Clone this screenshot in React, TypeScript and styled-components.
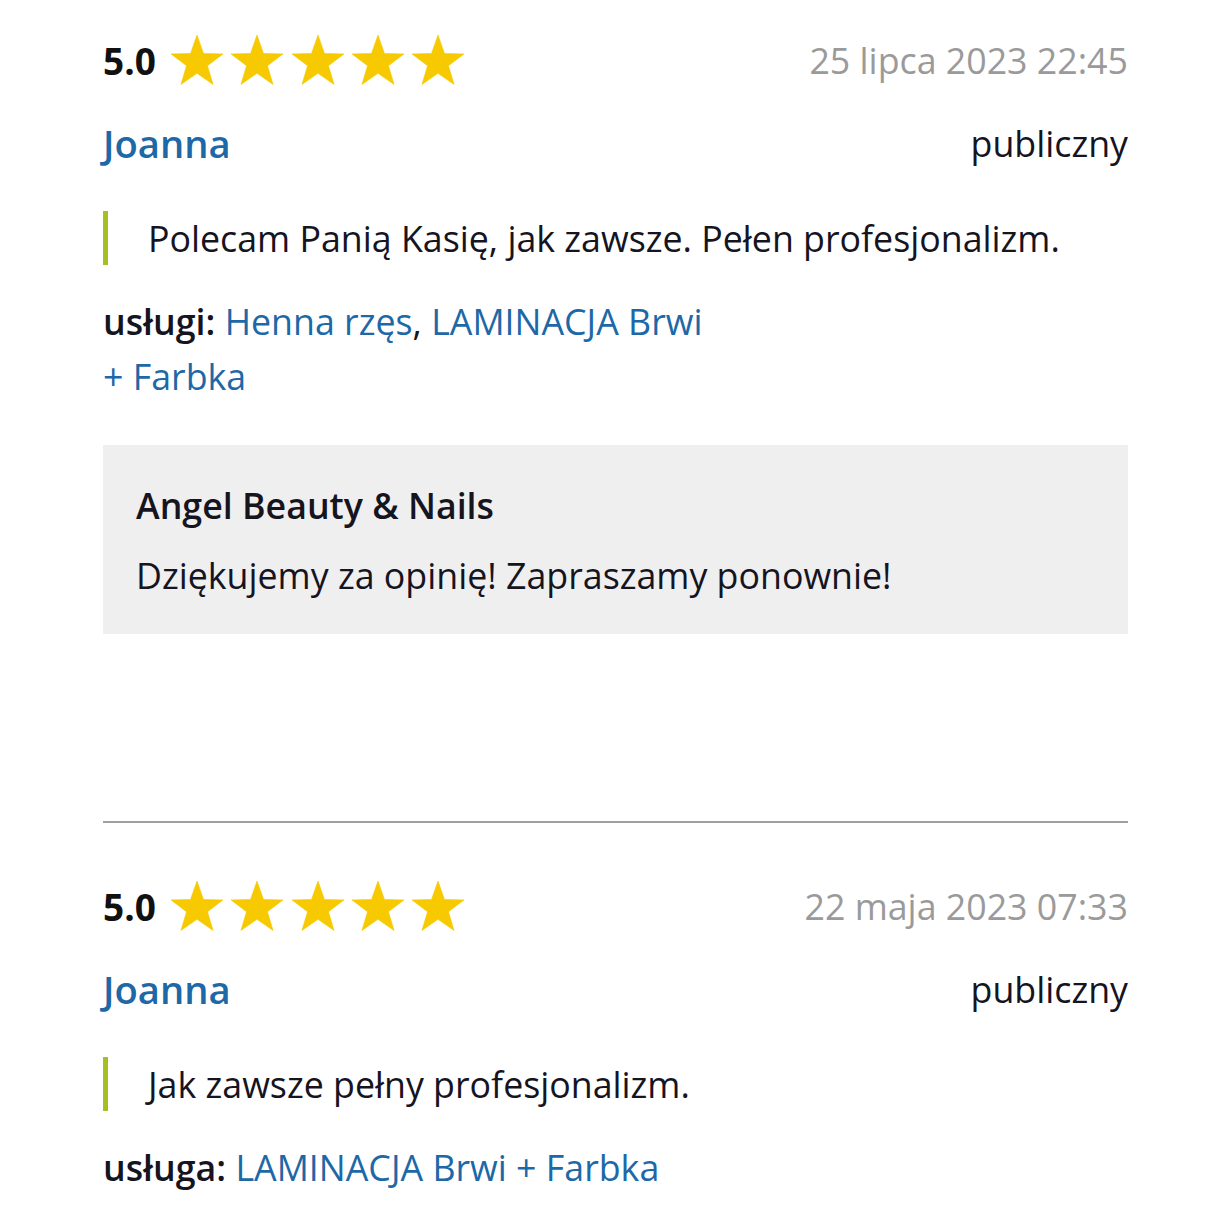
import React from 'react';
import styled, { createGlobalStyle } from 'styled-components';

const GlobalStyle = createGlobalStyle`
  html, body {
    margin: 0;
    padding: 0;
    background: #ffffff;
  }
  body {
    font-family: 'Open Sans', 'Noto Sans', sans-serif;
    color: #15141f;
  }
`;

const Page = styled.div`
  width: 1025px;
  margin-left: 103px;
  padding-top: 20px;
`;

const Review = styled.section`
  display: flex;
  flex-direction: column;
`;

const TopRow = styled.div`
  display: flex;
  align-items: center;
  justify-content: space-between;
  height: 80px;
`;

const Rating = styled.div`
  display: flex;
  align-items: center;
  gap: 15px;
`;

const Score = styled.span`
  font-size: 37px;
  font-weight: 700;
  color: #111;
`;

const Stars = styled.div`
  display: flex;
  gap: 8.4px;
`;

const DateText = styled.span`
  font-size: 35.75px;
  color: #9a9a9a;
`;

const AuthorRow = styled.div`
  display: flex;
  align-items: center;
  justify-content: space-between;
  height: 86px;
  line-height: 50px;
`;

const Author = styled.span`
  font-size: 38.2px;
  font-weight: 600;
  color: #1d68a7;
`;

const Visibility = styled.span`
  font-size: 35.75px;
  color: #15141f;
`;

const Quote = styled.blockquote`
  margin: 25px 0 0;
  border-left: 5px solid #a8bf22;
  padding: 0 0 0 40px;
  font-size: 35.75px;
  line-height: 54px;
  color: #15141f;
`;

const Services = styled.p`
  margin: 29px 0 0;
  max-width: 610px;
  font-size: 35.75px;
  line-height: 55px;
  color: #15141f;
`;

const Label = styled.b`
  font-weight: 600;
`;

const ServiceLink = styled.a`
  color: #1d68a7;
  text-decoration: none;
`;

const Reply = styled.div`
  margin-top: 41px;
  background: #efefef;
  padding: 35px 33px 34px;
  display: flex;
  flex-direction: column;
  gap: 20px;
`;

const ReplyTitle = styled.div`
  font-size: 35.75px;
  font-weight: 600;
  line-height: 50px;
  color: #15141f;
`;

const ReplyText = styled.div`
  font-size: 35.75px;
  line-height: 50px;
  color: #15141f;
`;

const Divider = styled.hr`
  margin: 187px 0 43px;
  border: none;
  border-top: 2px solid #a0a0a0;
`;

function Star() {
  return (
    <svg width="52" height="50" viewBox="0 0 52 50">
      <path
        d="M26 0 L32.47 18.44 L52 18.89 L36.46 30.74 L42.07 49.46 L26 38.34 L9.93 49.46 L15.54 30.74 L0 18.89 L19.53 18.44 Z"
        fill="#f7c900"
        stroke="#f7c900"
        strokeWidth="0.6"
        strokeLinejoin="round"
      />
    </svg>
  );
}

type ReviewData = {
  date: string;
  text: string;
  label: string;
  services: string[];
  reply?: { from: string; text: string };
};

const reviews: ReviewData[] = [
  {
    date: '25 lipca 2023 22:45',
    text: 'Polecam Panią Kasię, jak zawsze. Pełen profesjonalizm.',
    label: 'usługi:',
    services: ['Henna rzęs', 'LAMINACJA Brwi + Farbka'],
    reply: { from: 'Angel Beauty & Nails', text: 'Dziękujemy za opinię! Zapraszamy ponownie!' },
  },
  {
    date: '22 maja 2023 07:33',
    text: 'Jak zawsze pełny profesjonalizm.',
    label: 'usługa:',
    services: ['LAMINACJA Brwi + Farbka'],
  },
];

function ReviewItem({ data }: { data: ReviewData }) {
  return (
    <Review>
      <TopRow>
        <Rating>
          <Score>5.0</Score>
          <Stars>
            {[0, 1, 2, 3, 4].map((i) => (
              <Star key={i} />
            ))}
          </Stars>
        </Rating>
        <DateText>{data.date}</DateText>
      </TopRow>
      <AuthorRow>
        <Author>Joanna</Author>
        <Visibility>publiczny</Visibility>
      </AuthorRow>
      <Quote>{data.text}</Quote>
      <Services>
        <Label>{data.label}</Label>{' '}
        {data.services.map((s, i) => (
          <React.Fragment key={s}>
            {i > 0 && <span>, </span>}
            <ServiceLink href="#">{s}</ServiceLink>
          </React.Fragment>
        ))}
      </Services>
      {data.reply && (
        <Reply>
          <ReplyTitle>{data.reply.from}</ReplyTitle>
          <ReplyText>{data.reply.text}</ReplyText>
        </Reply>
      )}
    </Review>
  );
}

function App(): JSX.Element {
  return (
    <Page>
      <GlobalStyle />
      <ReviewItem data={reviews[0]} />
      <Divider />
      <ReviewItem data={reviews[1]} />
    </Page>
  );
}

export default App;
